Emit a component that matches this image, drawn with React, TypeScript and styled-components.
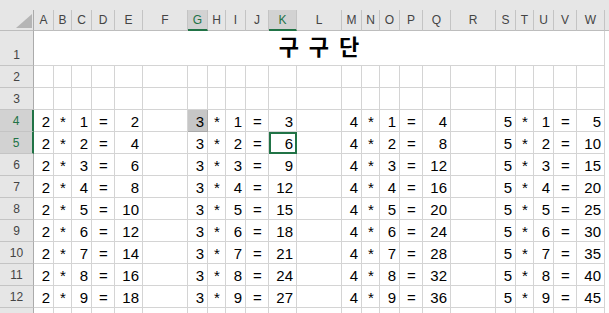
import React from "react";
import styled, { createGlobalStyle, css } from "styled-components";

const GlobalStyle = createGlobalStyle`
  html, body {
    margin: 0;
    padding: 0;
    background: #ffffff;
  }
  body {
    width: 609px;
    height: 313px;
    overflow: hidden;
  }
`;

const EXCEL_GREEN = "#217346";
const GRID = "#d4d4d4";
const HEADER_BG = "#e6e6e6";
const HEADER_SELECTED_BG = "#d2d2d2";

const LETTERS = "ABCDEFGHIJKLMNOPQRSTUVW".split("");
// each multiplication block uses the same six column widths
const BLOCK_WIDTHS = [20, 18, 20, 23, 28, 45];
const WIDTHS = LETTERS.map((_, i) => BLOCK_WIDTHS[i % 6]);

const SELECTED_COLS = ["G", "K"];
const SELECTED_ROWS = [4, 5];

const Sheet = styled.div`
    display: grid;
    grid-template-columns: 34px ${WIDTHS.map((w) => `${w}px`).join(" ")} 1fr;
    grid-template-rows: 10px 21px 35px repeat(12, 22px);
    width: 609px;
    height: 313px;
    overflow: hidden;
    font-family: "Liberation Sans", Arial, sans-serif;
`;

const TopBand = styled.div`
    grid-column: 1 / -1;
    background: ${HEADER_BG};
`;

const Corner = styled.div`
    display: flex;
    justify-content: flex-end;
    align-items: flex-end;
    padding: 0 1px 2px 0;
    box-sizing: border-box;
    background: ${HEADER_BG};
    border-right: 1px solid #ababab;
    border-bottom: 1px solid #bdbdbd;
`;

const ColHeader = styled.div<{ $selected?: boolean }>`
    display: flex;
    align-items: center;
    justify-content: center;
    box-sizing: border-box;
    font-size: 12px;
    line-height: 14px;
    color: #444444;
    background: ${HEADER_BG};
    border-right: 1px solid #c4c4c4;
    border-bottom: 1px solid #bdbdbd;
    ${({ $selected }) =>
        $selected &&
        css`
            color: ${EXCEL_GREEN};
            background: ${HEADER_SELECTED_BG};
            border-bottom: 2px solid ${EXCEL_GREEN};
        `}
`;

const HeaderFiller = styled.div`
    background: ${HEADER_BG};
    border-bottom: 1px solid #bdbdbd;
`;

const RowHeader = styled.div<{ $selected?: boolean }>`
    display: flex;
    align-items: flex-end;
    justify-content: center;
    box-sizing: border-box;
    padding-bottom: 3px;
    font-size: 12px;
    line-height: 14px;
    color: #444444;
    background: ${HEADER_BG};
    border-right: 1px solid #ababab;
    border-bottom: 1px solid #c4c4c4;
    ${({ $selected }) =>
        $selected &&
        css`
            color: ${EXCEL_GREEN};
            background: ${HEADER_SELECTED_BG};
            border-right: 2px solid ${EXCEL_GREEN};
        `}
`;

const TitleCell = styled.div`
    grid-column: 2 / ${LETTERS.length + 2};
    display: flex;
    justify-content: center;
    align-items: flex-start;
    padding-top: 1px;
    box-sizing: border-box;
    border-right: 1px solid ${GRID};
    border-bottom: 1px solid ${GRID};
    font-family: "Noto Sans CJK KR", "Noto Sans", sans-serif;
    font-weight: 700;
    font-size: 22px;
    line-height: 26px;
    word-spacing: 5px;
    color: #000000;
`;

const Cell = styled.div<{
    $align?: "right" | "center";
    $shaded?: boolean;
    $active?: boolean;
}>`
    display: flex;
    align-items: flex-end;
    justify-content: ${({ $align }) => ($align === "center" ? "center" : "flex-end")};
    box-sizing: border-box;
    padding: 0 3px 1px 0;
    ${({ $align }) => $align === "center" && "padding-left: 1px; padding-right: 0;"}
    border-right: 1px solid ${GRID};
    border-bottom: 1px solid ${GRID};
    font-size: 15px;
    line-height: 17px;
    color: #000000;
    white-space: nowrap;
    overflow: hidden;
    ${({ $shaded }) =>
        $shaded &&
        css`
            background: #c6c6c6;
            border-right-color: #a9a9a9;
            border-bottom-color: #a9a9a9;
        `}
    ${({ $active }) =>
        $active &&
        css`
            outline: 2px solid ${EXCEL_GREEN};
            outline-offset: -2px;
        `}
`;

const EdgeCell = styled.div`
    background: #ffffff;
`;

const CornerTriangle = () => (
    <svg width="16" height="14" viewBox="0 0 16 14">
        <polygon points="16,0 16,14 0,14" fill="#b5b5b5" />
    </svg>
);

function cellValue(colIndex: number, row: number): { text: string; align: "right" | "center" } {
    const i = row - 3;
    if (i < 1 || i > 9) return { text: "", align: "right" };
    const d = Math.floor(colIndex / 6) + 2;
    switch (colIndex % 6) {
        case 0:
            return { text: String(d), align: "right" };
        case 1:
            return { text: "*", align: "center" };
        case 2:
            return { text: String(i), align: "right" };
        case 3:
            return { text: "=", align: "center" };
        case 4:
            return { text: String(d * i), align: "right" };
        default:
            return { text: "", align: "right" };
    }
}

const BODY_ROWS = Array.from({ length: 12 }, (_, k) => k + 2);

export default function App() {
    return (
        <>
            <GlobalStyle />
            <Sheet>
                <TopBand />

                <Corner>
                    <CornerTriangle />
                </Corner>
                {LETTERS.map((l) => (
                    <ColHeader key={l} $selected={SELECTED_COLS.includes(l)}>
                        {l}
                    </ColHeader>
                ))}
                <HeaderFiller />

                <RowHeader>1</RowHeader>
                <TitleCell>구 구 단</TitleCell>
                <EdgeCell />

                {BODY_ROWS.map((row) => (
                    <React.Fragment key={row}>
                        <RowHeader $selected={SELECTED_ROWS.includes(row)}>
                            {row <= 12 ? row : ""}
                        </RowHeader>
                        {LETTERS.map((l, c) => {
                            const { text, align } = cellValue(c, row);
                            return (
                                <Cell
                                    key={l}
                                    $align={align}
                                    $shaded={l === "G" && row === 4}
                                    $active={l === "K" && row === 5}
                                >
                                    {text}
                                </Cell>
                            );
                        })}
                        <EdgeCell />
                    </React.Fragment>
                ))}
            </Sheet>
        </>
    );
}
